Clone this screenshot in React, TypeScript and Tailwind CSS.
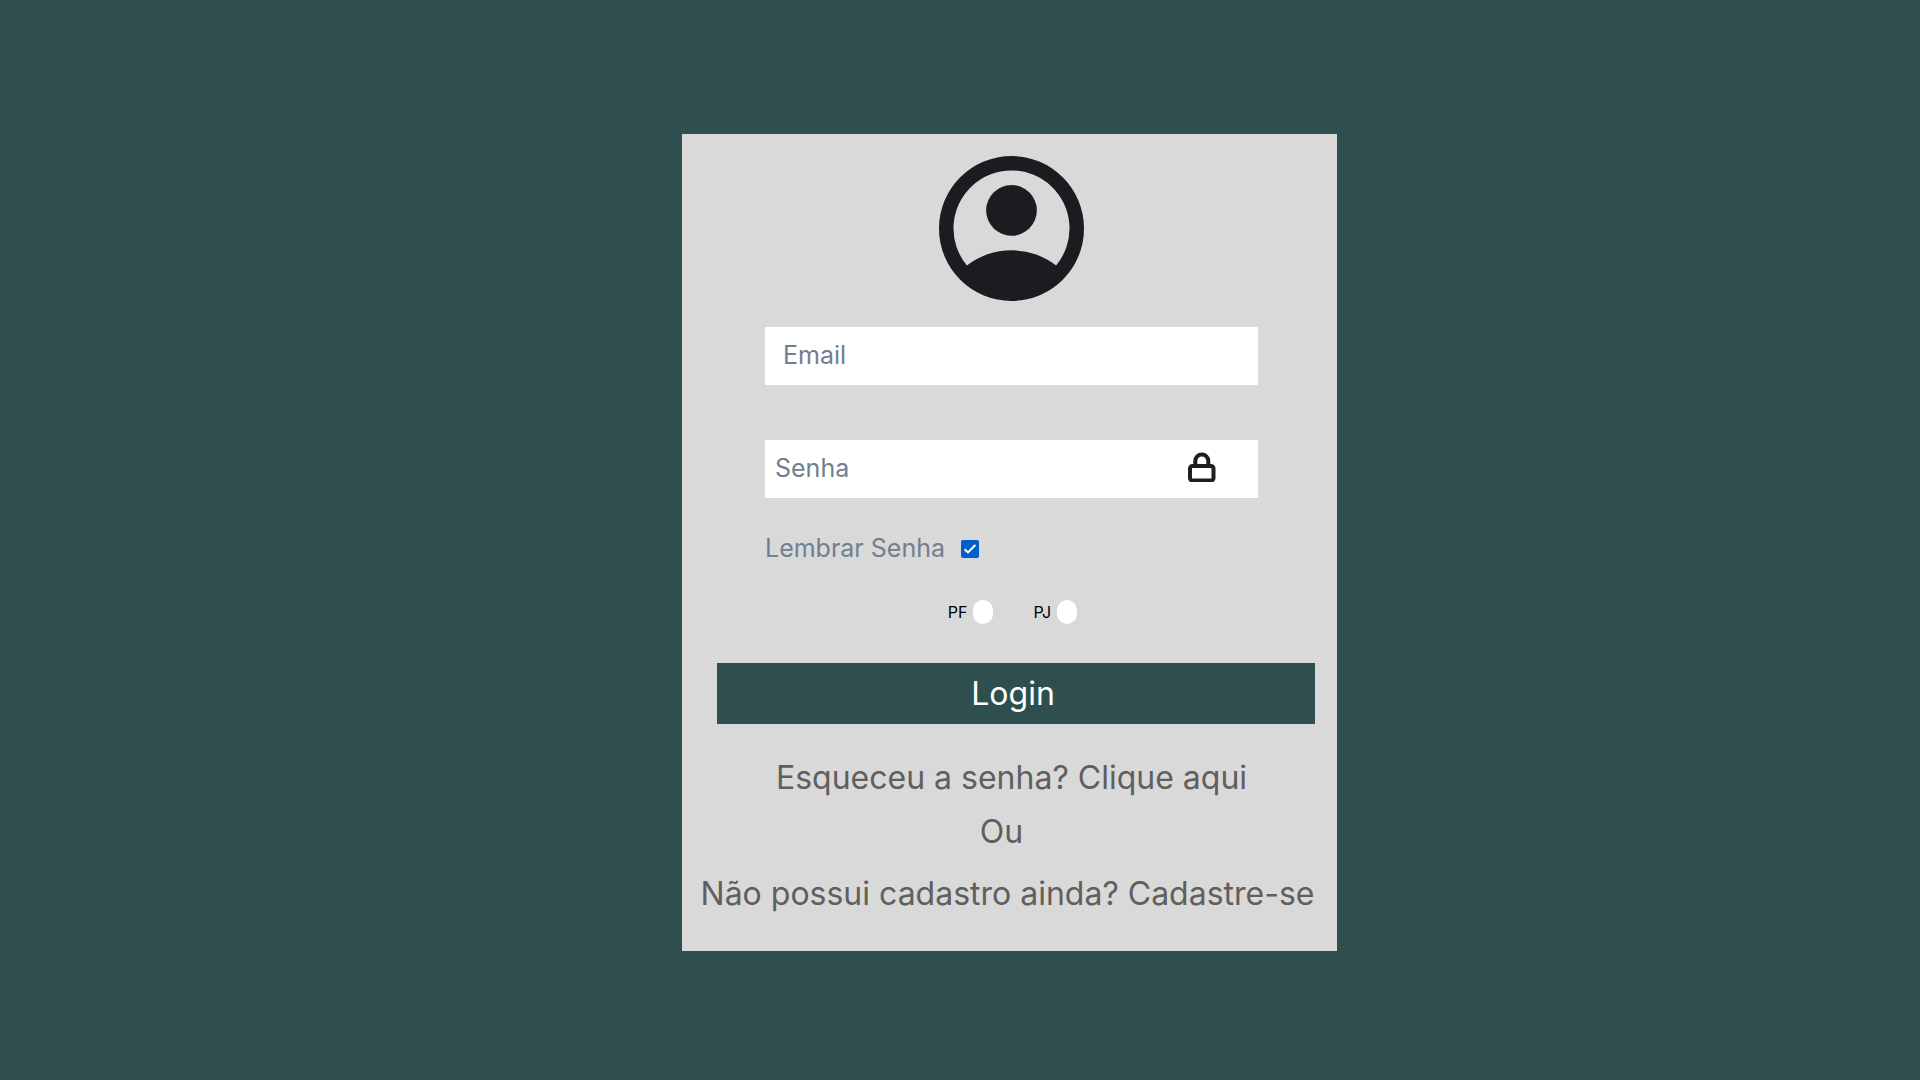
import { useState } from "react";

function AccountIcon() {
  return (
    <svg viewBox="2 2 20 20" className="size-[145px]" fill="#1D1B20" fillRule="evenodd" aria-hidden="true">
      <path d="M12 2a10 10 0 1 1 0 20a10 10 0 0 1 0-20ZM5.85 17.1q1.275-.975 2.85-1.537T12 15t3.3.563T18.15 17.1A8 8 0 1 0 5.85 17.1Z" />
      <circle cx="12" cy="9.5" r="3.5" />
    </svg>
  );
}

function LockIcon() {
  return (
    <svg viewBox="0 0 28 30" className="h-[30px] w-7" fill="none" stroke="#1E1E1E" strokeWidth="4" aria-hidden="true">
      <rect x="2" y="14" width="23.5" height="14.5" rx="2.5" />
      <path d="M7.3 14V9a6.5 6.5 0 0 1 13 0v5" />
    </svg>
  );
}

function PersonRadio({ id, label, checked, onSelect }: { id: string; label: string; checked: boolean; onSelect: () => void }) {
  return (
    <div className="flex items-center gap-[6px]">
      <label htmlFor={id} className="text-base leading-6 text-black">{label}</label>
      <input
        id={id}
        type="radio"
        name="pessoa"
        checked={checked}
        onChange={onSelect}
        className="h-6 w-5 appearance-none rounded-[10px] bg-white checked:border-4 checked:border-[#005FCC]"
      />
    </div>
  );
}

export default function App() {
  const [remember, setRemember] = useState(true);
  const [person, setPerson] = useState("");

  return (
    <main className="flex min-h-screen items-start justify-center bg-[#2F4F4F] pt-[134px] pb-16 pl-[99px] font-['Inter',sans-serif]">
      <form
        className="flex w-full max-w-[655px] flex-col bg-[#D9D9D9] pt-[22px] pb-[37px]"
        onSubmit={(e) => e.preventDefault()}
      >
        <div className="flex justify-center pl-1">
          <AccountIcon />
        </div>

        <div className="mt-[26px] flex flex-col pr-[79px] pl-[83px] text-[25px]">
          <input
            type="email"
            aria-label="Email"
            placeholder="Email"
            className="h-[58px] w-full bg-white px-[18px] pb-[2px] text-[#708090] placeholder:text-[#708090]"
          />
          <div className="mt-[55px] flex h-[58px] items-center bg-white pr-[42px] pb-[5px] pl-[10px]">
            <input
              type="password"
              aria-label="Senha"
              placeholder="Senha"
              className="h-full min-w-0 flex-1 bg-transparent pt-[3px] text-[#708090] placeholder:text-[#708090]"
            />
            <LockIcon />
          </div>
          <div className="mt-[33px] flex h-9 items-center gap-4">
            <label htmlFor="lembrar" className="text-[#708090]">Lembrar Senha</label>
            <span className="grid size-[18px]">
              <input
                id="lembrar"
                type="checkbox"
                checked={remember}
                onChange={(e) => setRemember(e.target.checked)}
                className="peer col-start-1 row-start-1 size-[18px] appearance-none rounded-xs bg-white checked:bg-[#005FCC]"
              />
              <svg viewBox="0 0 18 18" className="pointer-events-none invisible col-start-1 row-start-1 size-[18px] peer-checked:visible" fill="none" stroke="white" strokeWidth="2" aria-hidden="true">
                <path d="M3.6 9.2L7 12.4L14.4 5" />
              </svg>
            </span>
          </div>
        </div>

        <div className="mt-[33px] flex justify-center gap-10 pl-[6px]">
          <PersonRadio id="pf" label="PF" checked={person === "pf"} onSelect={() => setPerson("pf")} />
          <PersonRadio id="pj" label="PJ" checked={person === "pj"} onSelect={() => setPerson("pj")} />
        </div>

        <button type="submit" className="mt-[39px] mr-[22px] ml-[35px] h-[61px] bg-[#2F4F4F] pr-[6px] text-[32px] leading-10 text-white">
          Login
        </button>

        <div className="flex flex-col items-center text-center text-[32px] leading-10 text-[#5F5F5D]">
          <a href="#senha" className="mt-[34px] ml-1">Esqueceu a senha? Clique aqui</a>
          <p className="mt-[14px] mr-4">Ou</p>
          <a href="#cadastro" className="mt-[22px] mr-1">Não possui cadastro ainda? Cadastre-se</a>
        </div>
      </form>
    </main>
  );
}
